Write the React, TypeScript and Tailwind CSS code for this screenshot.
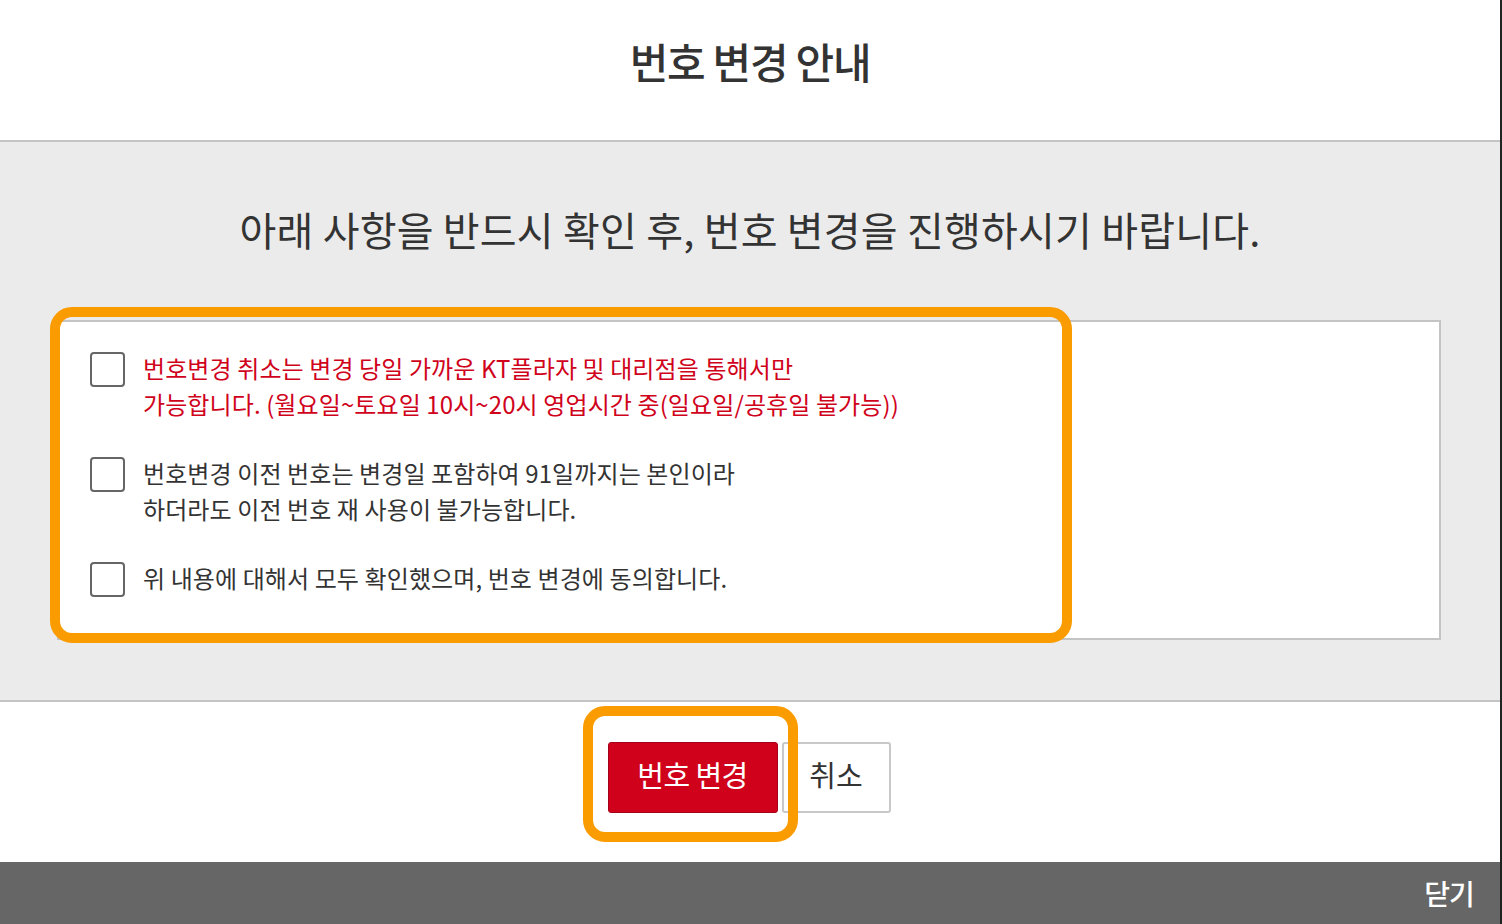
import { useState } from 'react'

const ITEMS = [
  {
    id: 'cancel',
    red: true,
    lines: [
      '번호변경 취소는 변경 당일 가까운 KT플라자 및 대리점을 통해서만',
      '가능합니다. (월요일~토요일 10시~20시 영업시간 중(일요일/공휴일 불가능))',
    ],
  },
  {
    id: 'reuse',
    red: false,
    lines: ['번호변경 이전 번호는 변경일 포함하여 91일까지는 본인이라', '하더라도 이전 번호 재 사용이 불가능합니다.'],
  },
  {
    id: 'agree',
    red: false,
    lines: ['위 내용에 대해서 모두 확인했으며, 번호 변경에 동의합니다.'],
  },
]

function CheckRow({ item }: { item: (typeof ITEMS)[number] }) {
  const [checked, setChecked] = useState(false)
  return (
    <label className="flex items-start gap-[18px] cursor-pointer">
      <span
        onClick={() => setChecked(!checked)}
        className={`mt-[2px] w-[35px] h-[35px] shrink-0 rounded-[4px] border-2 border-[#666] ${checked ? 'bg-[#d0021b]' : 'bg-white'}`}
      />
      <span
        className={`text-[24px] leading-[36px] tracking-[0.1px] ${item.red ? 'text-[#d0021b]' : 'text-[#333]'}`}
      >
        {item.lines.map((line) => (
          <span key={line} className="block">
            {line}
          </span>
        ))}
      </span>
    </label>
  )
}

export default function App() {
  return (
    <div
      className="w-[1502px] h-[924px] flex flex-col bg-white border-r-2 border-[#222] text-[#333]"
      style={{ fontFamily: '"Noto Sans CJK KR", "Noto Sans", sans-serif' }}
    >
      {/* Header */}
      <div className="h-[142px] shrink-0 flex justify-center pt-[34px] border-b-2 border-[#c4c4c4]">
        <h1 className="text-[42px] leading-[54px] tracking-[-0.03em] font-medium text-[#333]">번호 변경 안내</h1>
      </div>

      {/* Notice body */}
      <div className="relative h-[560px] shrink-0 bg-[#ebebeb] border-b-2 border-[#c4c4c4] pt-[61px]">
        <p className="text-center text-[40px] leading-[52px] tracking-[0.2px] font-normal text-[#333]">
          아래 사항을 반드시 확인 후, 번호 변경을 진행하시기 바랍니다.
        </p>
        <div className="mt-[65px] ml-[57px] mr-[59px] h-[320px] bg-white border-2 border-[#c4c4c4] pl-[31px] pt-[28px] flex flex-col gap-[33px]">
          {ITEMS.map((item) => (
            <CheckRow key={item.id} item={item} />
          ))}
        </div>
        {/* highlight */}
        <div className="absolute left-[50px] top-[165px] w-[1022px] h-[336px] border-[10px] border-[#fa9b00] rounded-[22px] pointer-events-none" />
      </div>

      {/* Actions */}
      <div className="relative h-[160px] shrink-0 flex justify-center items-start pt-[40px] gap-[4px] pr-[2px]">
        <button className="w-[170px] h-[71px] pb-[6px] rounded-[3px] bg-[#d0021b] border border-[#a8001a] text-white text-[29px] tracking-[-0.02em]">
          번호 변경
        </button>
        <button className="w-[109px] h-[71px] pb-[6px] rounded-[3px] bg-white border-2 border-[#c8c8c8] text-[#333] text-[29px]">
          취소
        </button>
        <div className="absolute left-[583px] top-[4px] w-[215px] h-[136px] border-[10px] border-[#fa9b00] rounded-[22px] pointer-events-none" />
      </div>

      {/* Footer */}
      <div className="flex-1 bg-[#666] flex items-center justify-end pr-[26px]">
        <button className="text-white text-[28px] font-medium tracking-[-0.03em]">닫기</button>
      </div>
    </div>
  )
}
